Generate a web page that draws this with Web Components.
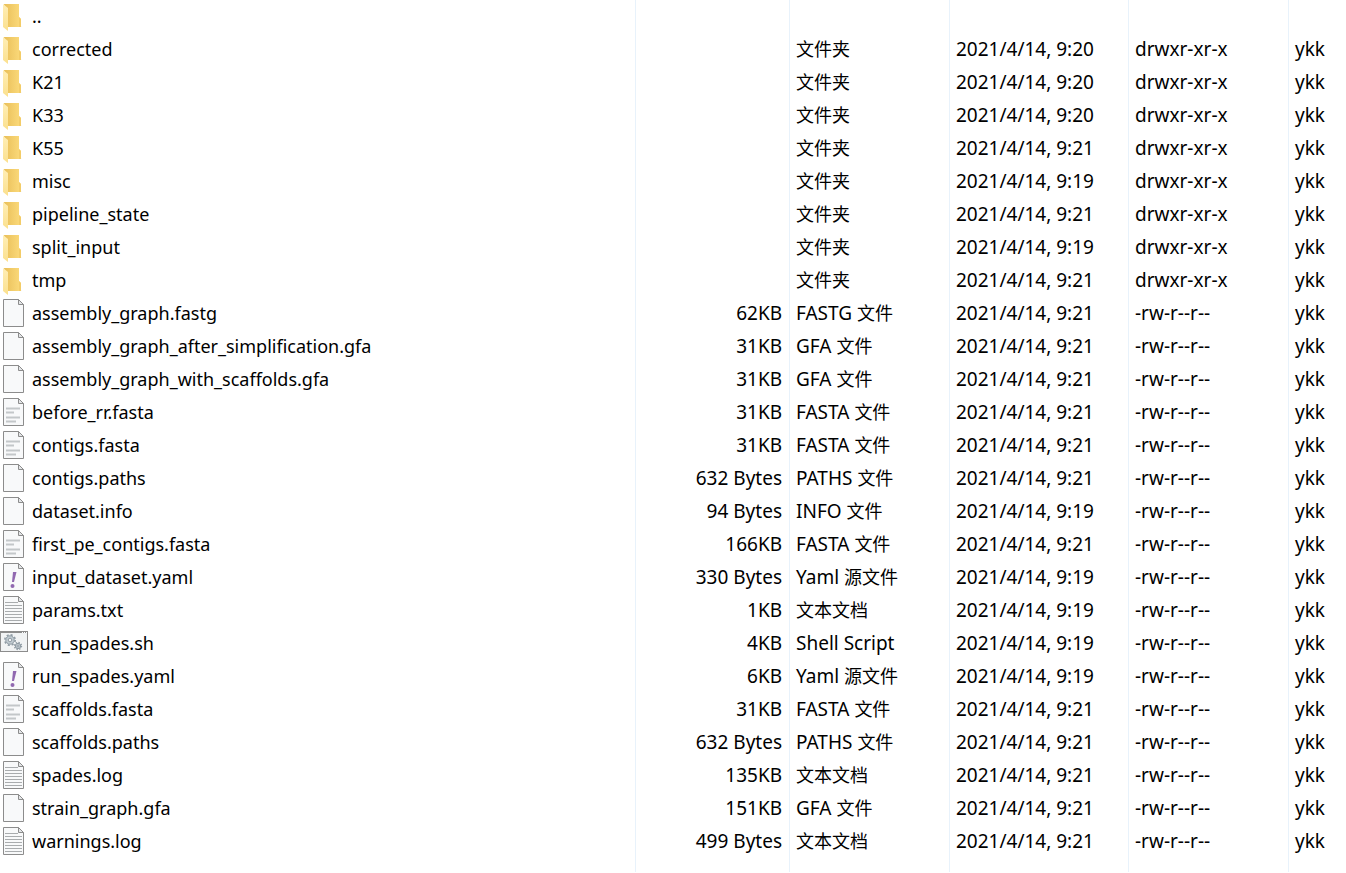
<!DOCTYPE html>
<html lang="zh-CN">
<head>
<meta charset="UTF-8">
<meta name="viewport" content="width=device-width, initial-scale=1.0">
<title>spades</title>
<style>
    body {
        margin: 0;
        background: #fff;
        color: #000;
        font-family: "Noto Sans", "Noto Sans CJK SC", sans-serif;
        font-size: 19px;
    }
</style>
</head>
<body>
<file-list></file-list>

<script>
const page = `
    <path d="M3.5 2.5H18.5L23.5 7.5V29.5H3.5Z" fill="#f8f9fa" stroke="#8c8c8c"/>
    <path d="M18.5 2.5V7.5H23.5Z" fill="#e4e6e8" stroke="#8c8c8c"/>`;

const icons = {
    folder: `
        <defs>
            <linearGradient id="back"><stop offset="0" stop-color="#e9bf59"/><stop offset="1" stop-color="#fcdb7c"/></linearGradient>
            <linearGradient id="front" x2="0" y2="1"><stop offset="0" stop-color="#ffeeb5"/><stop offset="1" stop-color="#fbe08e"/></linearGradient>
        </defs>
        <path d="M18 27H22L20 26Z" fill="#e6e6e6"/>
        <path d="M4 4H19V17L21 19V27H8Z" fill="url(#back)"/>
        <path d="M19 17L21 19V27H19Z" fill="#f3cc68"/>
        <path d="M3 4L8 8V31L3 27Z" fill="url(#front)"/>`,
    blank: page,
    fasta: page + `
        <path d="M6 12.5H20M6 16.5H14M6 21.5H20M6 25.5H16" stroke="#c3c7c9" stroke-width="2"/>`,
    text: page + `
        <path d="M5 8.5H18M5 11.5H22M5 14.5H22M5 17.5H22M5 20.5H22M5 23.5H22M5 26.5H22" stroke="#a9acae"/>`,
    yaml: page + `
        <path d="M13 11H16.5L14 21H12Z" fill="#9068b0"/>
        <circle cx="12.5" cy="25" r="2" fill="#9068b0"/>`,
    shell: `
        <rect x=".5" y="4.5" width="27" height="20" fill="#f1f3f4" stroke="#8c8c8c"/>
        <path d="M0 5H28" stroke="#8c8c8c" stroke-width="2"/>
        <path d="M22 5.5H23M24 5.5H25M26 5.5H27" stroke="#fff"/>
        <g stroke="#8f9ba4">
            <circle cx="10" cy="13" r="5.2" fill="none" stroke-width="1.6" stroke-dasharray="2.1 1.98"/>
            <circle cx="10" cy="13" r="4.2" fill="#c3cdd3"/>
            <circle cx="10" cy="13" r="1.8" fill="#f1f3f4"/>
            <circle cx="18" cy="19" r="3.5" fill="none" stroke-width="1.4" stroke-dasharray="1.4 1.35"/>
            <circle cx="18" cy="19" r="2.7" fill="#c3cdd3"/>
            <circle cx="18" cy="19" r="1" fill="#f1f3f4"/>
        </g>`
};

const folder = (name, time) => ['folder', name, '', '文件夹', '2021/4/14, ' + time, 'drwxr-xr-x', 'ykk'];
const file = (icon, name, size, type, time) => [icon, name, size, type, '2021/4/14, ' + time, '-rw-r--r--', 'ykk'];

const entries = [
    ['folder', '..', '', '', '', '', ''],
    folder('corrected', '9:20'),
    folder('K21', '9:20'),
    folder('K33', '9:20'),
    folder('K55', '9:21'),
    folder('misc', '9:19'),
    folder('pipeline_state', '9:21'),
    folder('split_input', '9:19'),
    folder('tmp', '9:21'),
    file('blank', 'assembly_graph.fastg', '62KB', 'FASTG 文件', '9:21'),
    file('blank', 'assembly_graph_after_simplification.gfa', '31KB', 'GFA 文件', '9:21'),
    file('blank', 'assembly_graph_with_scaffolds.gfa', '31KB', 'GFA 文件', '9:21'),
    file('fasta', 'before_rr.fasta', '31KB', 'FASTA 文件', '9:21'),
    file('fasta', 'contigs.fasta', '31KB', 'FASTA 文件', '9:21'),
    file('blank', 'contigs.paths', '632 Bytes', 'PATHS 文件', '9:21'),
    file('blank', 'dataset.info', '94 Bytes', 'INFO 文件', '9:19'),
    file('fasta', 'first_pe_contigs.fasta', '166KB', 'FASTA 文件', '9:21'),
    file('yaml', 'input_dataset.yaml', '330 Bytes', 'Yaml 源文件', '9:19'),
    file('text', 'params.txt', '1KB', '文本文档', '9:19'),
    file('shell', 'run_spades.sh', '4KB', 'Shell Script', '9:19'),
    file('yaml', 'run_spades.yaml', '6KB', 'Yaml 源文件', '9:19'),
    file('fasta', 'scaffolds.fasta', '31KB', 'FASTA 文件', '9:21'),
    file('blank', 'scaffolds.paths', '632 Bytes', 'PATHS 文件', '9:21'),
    file('text', 'spades.log', '135KB', '文本文档', '9:21'),
    file('blank', 'strain_graph.gfa', '151KB', 'GFA 文件', '9:21'),
    file('text', 'warnings.log', '499 Bytes', '文本文档', '9:21')
];

class FileIcon extends HTMLElement {
    constructor() {
        super();
        this.attachShadow({ mode: 'open' });
    }

    connectedCallback() {
        this.shadowRoot.innerHTML = `
            <style>
                :host {
                    display: block;
                    flex: none;
                    width: 28px;
                    height: 33px;
                }

                svg {
                    display: block;
                }
            </style>
            <svg width="28" height="33" viewBox="0 0 28 33" aria-hidden="true">${icons[this.getAttribute('type')]}</svg>
        `;
    }
}

class FileName extends HTMLElement {
    constructor() {
        super();
        this.attachShadow({ mode: 'open' });
    }

    connectedCallback() {
        this.shadowRoot.innerHTML = `
            <style>
                :host {
                    display: flex;
                    align-items: center;
                    gap: 4px;
                    font-size: 18px;
                }
            </style>
            <file-icon type="${this.getAttribute('type')}"></file-icon>
            <slot></slot>
        `;
    }
}

class FileList extends HTMLElement {
    constructor() {
        super();
        this.attachShadow({ mode: 'open' });
        this.shadowRoot.innerHTML = `
            <style>
                :host {
                    display: block;
                }

                table {
                    width: 100%;
                    table-layout: fixed;
                    border-collapse: separate;
                    border-spacing: 0;
                }

                .type, .mode {
                    width: 160px;
                }

                .size {
                    width: 154px;
                }

                .time {
                    width: 179px;
                }

                .owner {
                    width: 57px;
                }

                td {
                    box-sizing: border-box;
                    height: 33px;
                    padding: 0 7px 0 6px;
                    border-right: 1px solid #e8f2fb;
                    line-height: 33px;
                    white-space: nowrap;
                    overflow: hidden;
                }

                td:first-child {
                    padding-left: 0;
                }

                td:nth-child(2) {
                    text-align: right;
                }

                td:last-child {
                    border-right: 0;
                }

                /* column lines run on below the last entry */
                tfoot td {
                    height: 14px;
                }

                .han {
                    font-size: 18px;
                }
            </style>
            <table aria-label="Files">
                <colgroup>
                    <col>
                    <col class="size">
                    <col class="type">
                    <col class="time">
                    <col class="mode">
                    <col class="owner">
                </colgroup>
                <tbody>${entries.map(entry => this.row(entry)).join('')}</tbody>
                <tfoot><tr><td></td><td></td><td></td><td></td><td></td><td></td></tr></tfoot>
            </table>
        `;
    }

    row([icon, name, size, type, time, mode, owner]) {
        const label = type.replace(/[\u4e00-\u9fff]+/, '<span class="han">$&</span>');
        return `
            <tr>
                <td><file-name type="${icon}">${name}</file-name></td>
                <td>${size}</td>
                <td>${label}</td>
                <td>${time}</td>
                <td>${mode}</td>
                <td>${owner}</td>
            </tr>`;
    }
}

customElements.define('file-icon', FileIcon);
customElements.define('file-name', FileName);
customElements.define('file-list', FileList);
</script>
</body>
</html>
